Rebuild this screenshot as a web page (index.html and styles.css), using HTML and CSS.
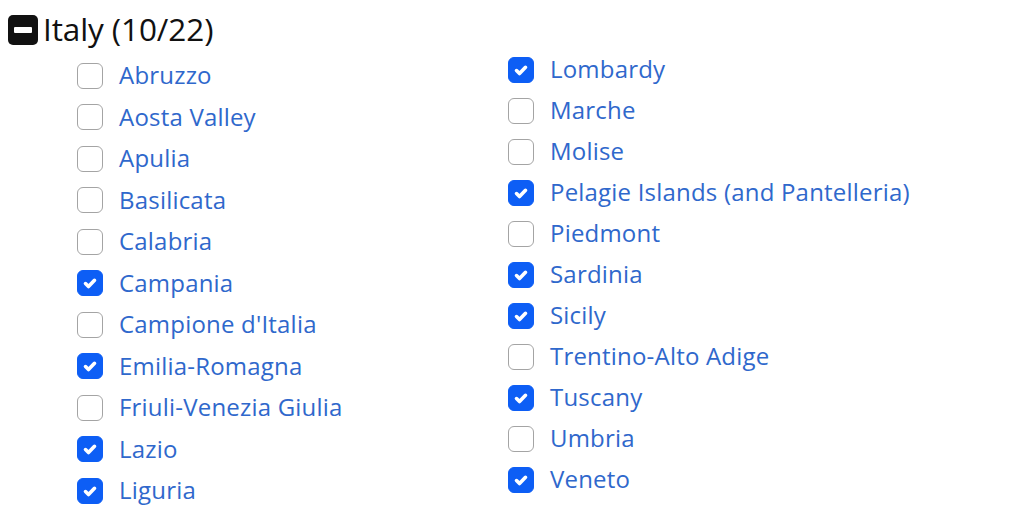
FILE: index.html
```html
<!DOCTYPE html>
<html>
<head>
<meta charset="utf-8">
<link rel="stylesheet" href="styles.css">
</head>
<body>
<div class="group">
  <div class="heading">
    <span class="toggle"><span class="bar"></span></span>
    <span class="title">Italy (10/22)</span>
  </div>
  <div class="cols">
    <ul class="col left">
      <li><span class="box"></span><span class="lbl">Abruzzo</span></li>
      <li><span class="box"></span><span class="lbl">Aosta Valley</span></li>
      <li><span class="box"></span><span class="lbl">Apulia</span></li>
      <li><span class="box"></span><span class="lbl">Basilicata</span></li>
      <li><span class="box"></span><span class="lbl">Calabria</span></li>
      <li><span class="box on"><svg viewBox="0 0 16 16"><path d="M5 8.4l2 2 4-4.2"/></svg></span><span class="lbl">Campania</span></li>
      <li><span class="box"></span><span class="lbl">Campione d'Italia</span></li>
      <li><span class="box on"><svg viewBox="0 0 16 16"><path d="M5 8.4l2 2 4-4.2"/></svg></span><span class="lbl">Emilia-Romagna</span></li>
      <li><span class="box"></span><span class="lbl">Friuli-Venezia Giulia</span></li>
      <li><span class="box on"><svg viewBox="0 0 16 16"><path d="M5 8.4l2 2 4-4.2"/></svg></span><span class="lbl">Lazio</span></li>
      <li><span class="box on"><svg viewBox="0 0 16 16"><path d="M5 8.4l2 2 4-4.2"/></svg></span><span class="lbl">Liguria</span></li>
    </ul>
    <ul class="col right">
      <li><span class="box on"><svg viewBox="0 0 16 16"><path d="M5 8.4l2 2 4-4.2"/></svg></span><span class="lbl">Lombardy</span></li>
      <li><span class="box"></span><span class="lbl">Marche</span></li>
      <li><span class="box"></span><span class="lbl">Molise</span></li>
      <li><span class="box on"><svg viewBox="0 0 16 16"><path d="M5 8.4l2 2 4-4.2"/></svg></span><span class="lbl">Pelagie Islands (and Pantelleria)</span></li>
      <li><span class="box"></span><span class="lbl">Piedmont</span></li>
      <li><span class="box on"><svg viewBox="0 0 16 16"><path d="M5 8.4l2 2 4-4.2"/></svg></span><span class="lbl">Sardinia</span></li>
      <li><span class="box on"><svg viewBox="0 0 16 16"><path d="M5 8.4l2 2 4-4.2"/></svg></span><span class="lbl">Sicily</span></li>
      <li><span class="box"></span><span class="lbl">Trentino-Alto Adige</span></li>
      <li><span class="box on"><svg viewBox="0 0 16 16"><path d="M5 8.4l2 2 4-4.2"/></svg></span><span class="lbl">Tuscany</span></li>
      <li><span class="box"></span><span class="lbl">Umbria</span></li>
      <li><span class="box on"><svg viewBox="0 0 16 16"><path d="M5 8.4l2 2 4-4.2"/></svg></span><span class="lbl">Veneto</span></li>
    </ul>
  </div>
</div>
</body>
</html>
```
FILE: styles.css
```css
html, body {
  margin: 0;
  padding: 0;
  background: #fff;
}
body {
  padding: 14px 8px 0 8px;
  font-family: "Open Sans", "Noto Sans", sans-serif;
}
.heading {
  display: flex;
  align-items: center;
  gap: 5px;
  height: 32px;
}
.toggle {
  width: 30px;
  height: 30px;
  background: #111;
  border-radius: 5px;
  display: flex;
  align-items: center;
  justify-content: center;
}
.toggle .bar {
  width: 18px;
  height: 6px;
  background: #fff;
  border-radius: 1px;
}
.title {
  font-size: 31.5px;
  color: #111;
  line-height: 32px;
  letter-spacing: -0.1px;
  position: relative;
  top: -1px;
}
.cols {
  display: grid;
  grid-template-columns: 431px 431px;
  padding-left: 69px;
}
.col {
  list-style: none;
  margin: 0;
  padding: 0;
}
.col.left {
  padding-top: 9px;
}
.col.left li {
  height: 41.5px;
}
.col.right {
  padding-top: 3px;
}
.col.right li {
  height: 41px;
}
.col li {
  display: flex;
  align-items: center;
  gap: 16px;
}
.box {
  width: 26px;
  height: 26px;
  box-sizing: border-box;
  border: 1.5px solid #a4a4a4;
  border-radius: 6px;
  background: #fff;
  flex: none;
  display: flex;
  align-items: center;
  justify-content: center;
}
.box.on {
  background: #0d5ef5;
  border-color: #0d5ef5;
}
.box svg {
  width: 24px;
  height: 24px;
  fill: none;
  stroke: #fff;
  stroke-width: 2.4;
  stroke-linecap: round;
  stroke-linejoin: round;
}
.lbl {
  font-size: 24px;
  font-weight: 500;
  color: #2f68cc;
  letter-spacing: 0.2px;
  position: relative;
  top: -1px;
}
```
